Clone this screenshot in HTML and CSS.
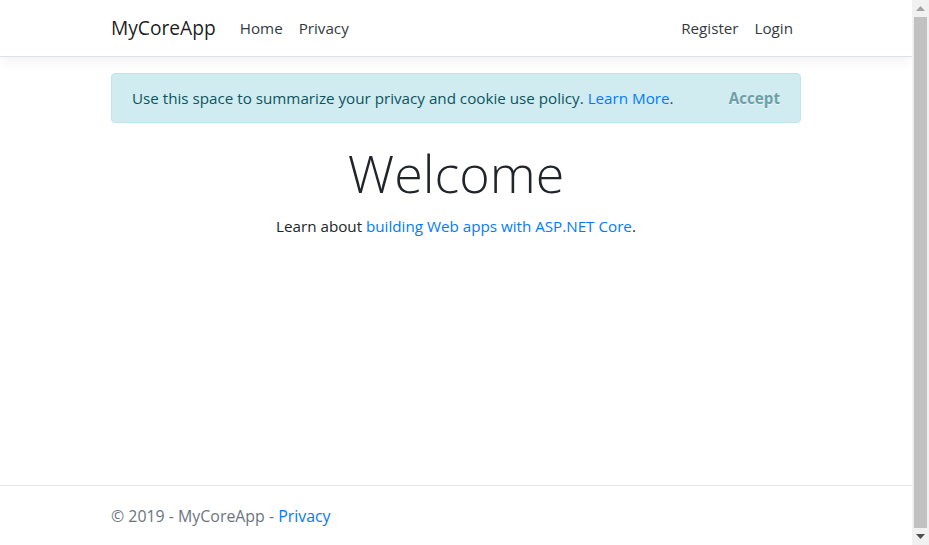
FILE: index.html
```html
<!DOCTYPE html>
<html>
<head>
  <meta charset="utf-8">
  <title>Home Page - MyCoreApp</title>
  <link rel="stylesheet" href="styles.css">
</head>
<body>
  <div class="window">
    <div class="page">
      <header>
        <nav class="navbar">
          <div class="container nav-inner">
            <a class="navbar-brand" href="#">MyCoreApp</a>
            <ul class="nav-list">
              <li><a class="nav-link" href="#">Home</a></li>
              <li><a class="nav-link" href="#">Privacy</a></li>
            </ul>
            <ul class="nav-list nav-right">
              <li><a class="nav-link" href="#">Register</a></li>
              <li><a class="nav-link" href="#">Login</a></li>
            </ul>
          </div>
        </nav>
      </header>

      <div class="container main">
        <div class="alert" id="cookieConsent">
          <span>Use this space to summarize your privacy and cookie use policy. <a href="#">Learn More</a>.</span>
          <button type="button" class="accept-policy">Accept</button>
        </div>

        <div class="text-center">
          <h1 class="display-4">Welcome</h1>
          <p>Learn about <a href="#">building Web apps with ASP.NET Core</a>.</p>
        </div>
      </div>

      <footer class="footer">
        <div class="container">
          &copy; 2019 - MyCoreApp - <a href="#">Privacy</a>
        </div>
      </footer>
    </div>

    <div class="scrollbar">
      <div class="sb-arrow">
        <svg width="9" height="5" viewBox="0 0 9 5"><polygon points="0,5 9,5 4.5,0" fill="#a3a3a3"/></svg>
      </div>
      <div class="sb-thumb"></div>
      <div class="sb-arrow">
        <svg width="9" height="5" viewBox="0 0 9 5"><polygon points="0,0 9,0 4.5,5" fill="#505050"/></svg>
      </div>
    </div>
  </div>
</body>
</html>
```

FILE: styles.css
```css
html, body {
  margin: 0;
  height: 100%;
  overflow: hidden;
}

body {
  font-family: "Open Sans", "Noto Sans", sans-serif;
  font-size: 15.2px;
  line-height: 24px;
  color: #212529;
  background-color: #ffffff;
}

a {
  color: #007bff;
  text-decoration: none;
}

.window {
  display: flex;
  height: 100%;
}

.page {
  flex: 1;
  display: flex;
  flex-direction: column;
  min-width: 0;
}

.container {
  box-sizing: border-box;
  width: 100%;
  max-width: 720px;
  margin: 0 auto;
  padding: 0 15px;
}

/* navbar */
.navbar {
  background-color: #ffffff;
  border-bottom: 1px solid #dee2e6;
  box-shadow: 0 4px 12px rgba(0, 0, 0, 0.05);
  padding: 8px 16px;
  margin-bottom: 16px;
}

.nav-inner {
  display: flex;
  align-items: center;
  padding: 0 15px;
  max-width: 720px;
}

.navbar-brand {
  font-size: 19.2px;
  line-height: 30px;
  padding: 5px 0;
  margin-right: 16px;
  color: rgba(0, 0, 0, 0.9);
}

.nav-list {
  display: flex;
  list-style: none;
  margin: 0;
  padding: 0;
}

.nav-right {
  margin-left: auto;
}

.nav-link {
  display: block;
  padding: 8px;
  color: #343a40;
}

/* cookie alert */
.alert {
  display: flex;
  justify-content: space-between;
  align-items: center;
  padding: 12px 20px;
  margin-bottom: 16px;
  border: 1px solid #bee5eb;
  border-radius: 4px;
  background-color: #d1ecf1;
  color: #0c5460;
}

.accept-policy {
  font-family: inherit;
  font-size: 15.2px;
  font-weight: 700;
  line-height: inherit;
  padding: 0;
  border: 0;
  background: transparent;
  color: #0c5460;
  opacity: 0.5;
  text-shadow: 0 1px 0 #ffffff;
  cursor: pointer;
}

.text-center {
  text-align: center;
}

.display-4 {
  font-size: 52px;
  font-weight: 300;
  line-height: 67px;
  margin: 0 0 8px;
}

p {
  margin: 0 0 16px;
}

.main {
  flex: 1;
}

/* footer */
.footer {
  border-top: 1px solid #e5e5e5;
  font-size: 15.9px;
  line-height: 60px;
  margin-bottom: -1px;
  white-space: nowrap;
  color: #6c757d;
}

/* scrollbar */
.scrollbar {
  width: 17px;
  background-color: #f1f1f1;
  display: flex;
  flex-direction: column;
}

.sb-arrow {
  height: 17px;
  display: flex;
  align-items: center;
  justify-content: center;
}

.sb-thumb {
  flex: 1;
  margin: 0 2px;
  background-color: #c1c1c1;
}
```
